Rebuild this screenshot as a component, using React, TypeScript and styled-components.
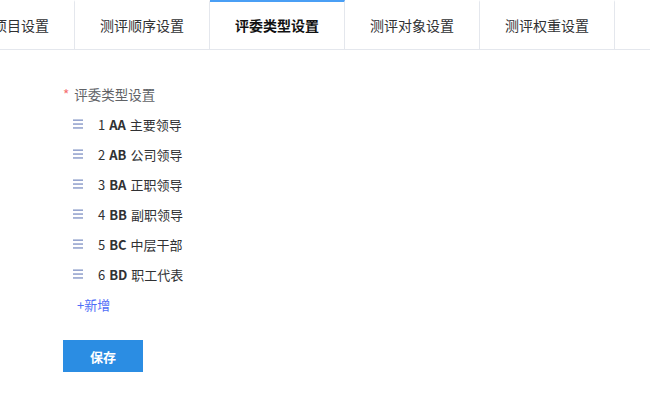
import React from 'react';
import styled, { createGlobalStyle } from 'styled-components';

const GlobalStyle = createGlobalStyle`
  body {
    margin: 0;
    background: #fff;
    font-family: 'Noto Sans CJK SC', 'Noto Sans', sans-serif;
  }
`;

const Page = styled.div`
  width: 650px;
  height: 400px;
  overflow: hidden;
  background: #fff;
`;

const TabHeader = styled.div`
  height: 49px;
  border-bottom: 1px solid #e4e7ed;
  overflow: hidden;
  position: relative;
`;

// scrolled tab nav, first tab partly off screen
const TabNav = styled.div`
  display: flex;
  transform: translateX(-60px);
`;

const Tab = styled.div<{ $active?: boolean }>`
  box-sizing: border-box;
  flex: 0 0 135px;
  height: 50px;
  border-right: 1px solid #e4e7ed;
  border-top: 2px solid ${p => (p.$active ? '#4a9ff5' : 'transparent')};
  border-bottom: 1px solid ${p => (p.$active ? '#fff' : '#e4e7ed')};
  display: flex;
  align-items: center;
  justify-content: center;
  font-size: 14px;
  color: ${p => (p.$active ? '#111' : '#303133')};
  font-weight: ${p => (p.$active ? 700 : 400)};
  background: #fff;
  white-space: nowrap;
  padding-bottom: 1px;
`;

const Content = styled.div`
  padding: 34px 0 0 63px;
`;

const Label = styled.div`
  display: flex;
  align-items: center;
  height: 20px;
  font-size: 13.5px;
  color: #606266;
  margin-bottom: 5px;
`;

const Required = styled.span`
  color: #f56c6c;
  margin-right: 5px;
`;

const List = styled.div`
  display: flex;
  flex-direction: column;
`;

const Row = styled.div`
  display: flex;
  align-items: center;
  height: 30px;
  padding-left: 10px;
  font-size: 13px;
  color: #303133;
`;

const Handle = styled.svg`
  width: 10px;
  height: 10px;
  margin-right: 15px;
  cursor: move;
`;

const Code = styled.b`
  font-weight: 700;
  margin: 0 4px;
`;

const AddLink = styled.a`
  display: inline-block;
  margin-top: 1px;
  height: 30px;
  line-height: 30px;
  padding-left: 14px;
  font-size: 13px;
  color: #4f6ef7;
  cursor: pointer;
`;

const SaveButton = styled.button`
  margin-top: 20px;
  width: 80px;
  height: 32px;
  border: none;
  background: #2b8de3;
  color: #fff;
  font-family: inherit;
  font-size: 13px;
  font-weight: 700;
  cursor: pointer;
`;

const tabs = ['测评项目设置', '测评顺序设置', '评委类型设置', '测评对象设置', '测评权重设置'];

const judges = [
  { no: 1, code: 'AA', name: '主要领导' },
  { no: 2, code: 'AB', name: '公司领导' },
  { no: 3, code: 'BA', name: '正职领导' },
  { no: 4, code: 'BB', name: '副职领导' },
  { no: 5, code: 'BC', name: '中层干部' },
  { no: 6, code: 'BD', name: '职工代表' },
];

function DragIcon() {
  return (
    <Handle viewBox="0 0 10 10">
      <rect x="0" y="0.5" width="10" height="1.3" fill="#7f91c4" />
      <rect x="0" y="4.4" width="10" height="1.3" fill="#7f91c4" />
      <rect x="0" y="8.3" width="10" height="1.3" fill="#7f91c4" />
    </Handle>
  );
}

function App() {
  return (
    <Page>
      <GlobalStyle />
      <TabHeader>
        <TabNav>
          {tabs.map(t => (
            <Tab key={t} $active={t === '评委类型设置'}>{t}</Tab>
          ))}
          <Tab />
        </TabNav>
      </TabHeader>

      <Content>
        <Label><Required>*</Required>评委类型设置</Label>
        <List>
          {judges.map(j => (
            <Row key={j.code}>
              <DragIcon />
              {j.no}<Code>{j.code}</Code>{j.name}
            </Row>
          ))}
        </List>
        <AddLink>+新增</AddLink>
        <div>
          <SaveButton>保存</SaveButton>
        </div>
      </Content>
    </Page>
  );
}

export default App;
